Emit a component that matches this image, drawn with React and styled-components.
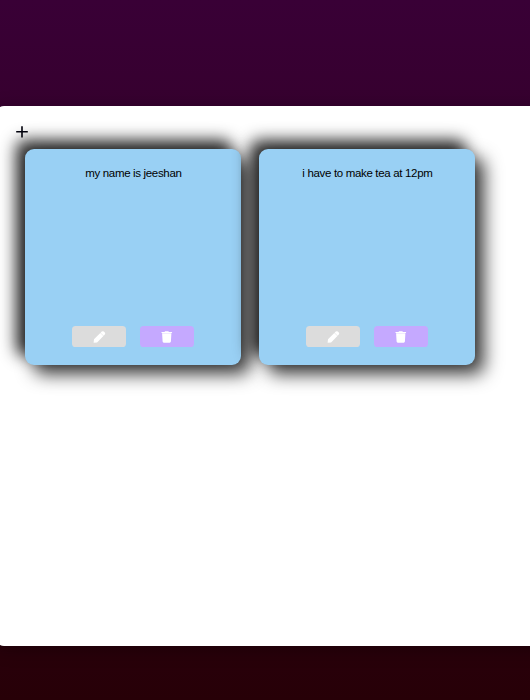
import React from "react";
import styled, { createGlobalStyle } from "styled-components";

const GlobalStyle = createGlobalStyle`
  * { box-sizing: border-box; }
  body { margin: 0; overflow: hidden; font-family: "Liberation Sans", Arial, sans-serif; }
`;

const Page = styled.main`
  height: 700px;
  padding-top: 106px;
  overflow: hidden;
  background: linear-gradient(#390036, #270007);
`;

const Board = styled.section`
  width: 620px;
  height: 539.5px;
  margin-left: -4px;
  padding: 18px 0 0 20px;
  border-radius: 8px;
  background: #fff;
  box-shadow: 0 3px 18px rgba(0, 0, 0, 0.3);
`;

const AddButton = styled.button`
  display: block;
  width: 12px;
  height: 16px;
  padding: 0;
  border: 0;
  background: none;
  color: #00000c;
  svg { display: block; }
`;

const Notes = styled.div`
  display: flex;
  gap: 18px;
  margin: 9px 0 0 9.4px;
`;

const Card = styled.article`
  display: flex;
  flex-direction: column;
  justify-content: space-between;
  width: 216px;
  height: 216px;
  padding: 18px;
  border-radius: 9px;
  background: #99d0f4;
  box-shadow: 9px 9px 18px rgba(0, 0, 0, 0.78), -9px -9px 16px rgba(0, 0, 0, 0.84);
`;

const NoteText = styled.p`
  margin: 0;
  font-size: 11.5px;
  line-height: 13px;
  letter-spacing: -0.33px;
  text-align: center;
  color: #000;
`;

const Actions = styled.div`
  display: flex;
  justify-content: center;
  gap: 14px;
  padding-right: 1px;
`;

const ActionButton = styled.button`
  display: flex;
  align-items: center;
  justify-content: center;
  width: 54px;
  height: 21px;
  padding: 0;
  border: 0;
  border-radius: 3.6px;
  color: #fff;
  background: ${({ $kind }) => ($kind === "delete" ? "#c5a9ff" : "#dcdcdc")};
  svg { display: block; }
`;

const PencilIcon = () => (
  <svg width="14" height="14" viewBox="0 0 14 14" fill="currentColor">
    <path d="M1.6 12.8 2 9.3 8.3 3 11.4 6.1 5.1 12.4ZM8.6 2.7 9.8 1.6Q10.8.7 11.8 1.6L12.8 2.6Q13.7 3.6 12.8 4.6L11.7 5.8Z" />
  </svg>
);

const TrashIcon = () => (
  <svg width="12" height="14" viewBox="0 0 12 14" fill="currentColor">
    <path d="M4 1.3h3.4l.5.7h2.8q.4 0 .4.4v.7H.4v-.7q0-.4.4-.4h2.7ZM1.1 3.3h9.3l-.5 8.3q-.1 1.1-1.2 1.1H2.8q-1.1 0-1.2-1.1Z" />
  </svg>
);

const notes = ["my name is jeeshan", "i have to make tea at 12pm"];

export default function App() {
  return (
    <Page>
      <GlobalStyle />
      <Board>
        <AddButton aria-label="Add note">
          <svg width="12" height="16" viewBox="0 0 12 16" fill="none" stroke="currentColor" strokeWidth="1.6">
            <path d="M.2 7.8h11.6M6 2.2v11.2" />
          </svg>
        </AddButton>
        <Notes>
          {notes.map((note) => (
            <Card key={note}>
              <NoteText>{note}</NoteText>
              <Actions>
                <ActionButton aria-label="Edit"><PencilIcon /></ActionButton>
                <ActionButton $kind="delete" aria-label="Delete"><TrashIcon /></ActionButton>
              </Actions>
            </Card>
          ))}
        </Notes>
      </Board>
    </Page>
  );
}
